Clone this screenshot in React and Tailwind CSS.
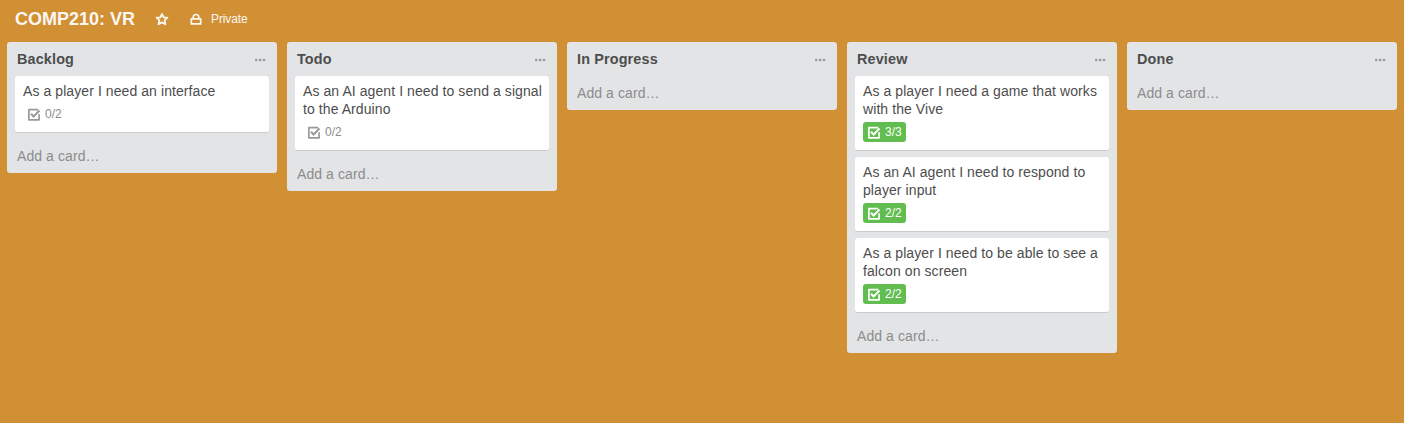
const lists = [
  { name: 'Backlog', cards: [{ title: 'As a player I need an interface', checks: '0/2' }] },
  { name: 'Todo', cards: [{ title: 'As an AI agent I need to send a signal to the Arduino', checks: '0/2' }] },
  { name: 'In Progress', cards: [] },
  {
    name: 'Review',
    cards: [
      { title: 'As a player I need a game that works with the Vive', checks: '3/3', done: true },
      { title: 'As an AI agent I need to respond to player input', checks: '2/2', done: true },
      { title: 'As a player I need to be able to see a falcon on screen', checks: '2/2', done: true },
    ],
  },
  { name: 'Done', cards: [] },
];

function StarIcon() {
  return (
    <svg className="h-[14px] w-[14px]" viewBox="0 0 14 14" fill="none" stroke="currentColor" strokeWidth="1.8" strokeLinejoin="round">
      <path d="M7 2 8.6 5.3 12.4 5.7 9.6 8.3 10.4 12.3 7 10.4 3.6 12.3 4.4 8.3 1.6 5.7 5.4 5.3Z" />
    </svg>
  );
}

function LockIcon() {
  return (
    <svg className="h-3 w-3" viewBox="0 0 12 12" fill="none" stroke="currentColor" strokeWidth="1.8" strokeLinejoin="round">
      <path d="M1.3 5.9H10.7V10.9H1.3Z" />
      <path d="M3.2 5.8V4.2C3.2 2.6 4.4 1.5 6 1.5S8.8 2.6 8.8 4.2V5.8" strokeWidth="1.6" />
    </svg>
  );
}

function CheckIcon() {
  return (
    <svg className="h-[14px] w-[14px]" viewBox="0 0 14 14" fill="none" stroke="currentColor" strokeWidth="1.7">
      <path d="M11.2 2.6H1.9V12.8H12.1V7.2" strokeLinejoin="round" />
      <path d="M4 6.8 6.6 9.5 12.5 3.5" strokeWidth="2" />
    </svg>
  );
}

function MenuIcon() {
  return (
    <svg className="mt-px h-1 w-[11px]" viewBox="0 0 11 4" fill="currentColor">
      <circle cx="1.2" cy="2" r="1.35" />
      <circle cx="5.1" cy="2" r="1.35" />
      <circle cx="9" cy="2" r="1.35" />
    </svg>
  );
}

function Card({ title, checks, done }) {
  return (
    <article className="mb-1.5 rounded-[3px] border-b border-[#c8cacc] bg-white px-2 pt-1.5 pb-2">
      <p className="-mr-1 text-[14px] leading-[18px] tracking-[0.08px] text-[#4d4d4d]">{title}</p>
      <div
        className={
          done
            ? 'mt-1 flex h-5 w-[43px] items-center rounded-[3px] bg-[#61bd4f] pl-1 text-white'
            : 'mt-1 flex h-5 w-[43px] items-center rounded-[3px] pl-1 text-[#999999]'
        }
      >
        <CheckIcon />
        <span className={done ? 'ml-1 text-[12px] leading-5' : 'ml-1 text-[12px] leading-5 text-[#8c8c8c]'}>{checks}</span>
      </div>
    </article>
  );
}

function List({ name, cards }) {
  return (
    <section className="w-[270px] shrink-0 rounded-[3px] bg-[#e2e4e6]">
      <header className="flex h-[34px] items-center justify-between pr-[11px] pl-2.5 text-[#999999]">
        <h2 className="text-[14.4px] leading-[18px] font-bold tracking-[0.15px] text-[#4d4d4d]">{name}</h2>
        <MenuIcon />
      </header>
      <div className="px-2">
        {cards.map((card) => (
          <Card key={card.title} {...card} />
        ))}
      </div>
      <div className="h-[34px] px-2.5 text-[14px] leading-[34px] tracking-[0.08px] text-[#8c8c8c]">Add a card…</div>
    </section>
  );
}

export default function App() {
  return (
    <div className="h-[423px] w-[1404px] overflow-hidden bg-[#d29034] font-['Liberation_Sans',Arial,sans-serif]">
      <header className="flex h-[42px] items-center pb-1 pl-[15px] text-[#fbf7f2]">
        <h1 className="w-[140px] text-[18px] leading-6 font-bold">COMP210: VR</h1>
        <StarIcon />
        <span className="ml-[21px]">
          <LockIcon />
        </span>
        <span className="ml-[9px] text-[12px] leading-5 tracking-[-0.1px]">Private</span>
      </header>
      <main className="flex items-start gap-2.5 pl-[7px]">
        {lists.map((list) => (
          <List key={list.name} {...list} />
        ))}
      </main>
    </div>
  );
}
